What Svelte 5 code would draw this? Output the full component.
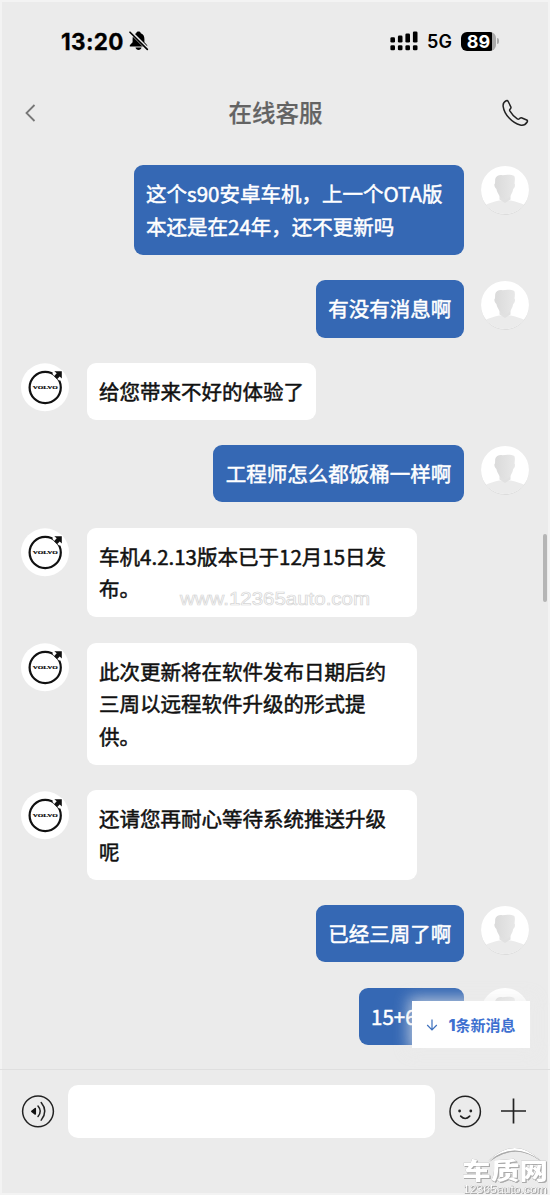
<script lang="ts">
	type Message = { me: boolean; text: string; clipped?: boolean };

	const messages: Message[] = [
		{ me: true, text: '这个s90安卓车机，上一个OTA版本还是在24年，还不更新吗' },
		{ me: true, text: '有没有消息啊' },
		{ me: false, text: '给您带来不好的体验了' },
		{ me: true, text: '工程师怎么都饭桶一样啊' },
		{ me: false, text: '车机4.2.13版本已于12月15日发布。' },
		{ me: false, text: '此次更新将在软件发布日期后约三周以远程软件升级的形式提供。' },
		{ me: false, text: '还请您再耐心等待系统推送升级呢' },
		{ me: true, text: '已经三周了啊' },
		{ me: true, text: '15+6', clipped: true }
	];
</script>

<div class="phone">
	<div class="status">
		<span class="time">13:20</span>
		<svg class="bell" width="20" height="20" viewBox="0 0 20 20">
			<path d="M9.500 .6C8.200 .6 7.400 1.300 7.200 2.200 4.400 3.200 3.600 5.500 3.600 8v3.200L.8 14.200V15.500H18.200V14.200L15.400 11.200V8c0-2.500-.8-4.800-3.600-5.800C11.600 1.300 10.800 .6 9.500 .6z" />
			<path d="M6.500 16.600h6c-.3 1.600-1.500 2.500-3 2.500s-2.700-.9-3-2.500z" />
			<path d="M1.600 1 18.800 18.200" stroke="#ebebeb" stroke-width="3.400" />
			<path d="M1 1.200 18.300 18.400" stroke="#000" stroke-width="1.600" stroke-linecap="round" />
		</svg>
		<svg class="signal" width="29" height="20" viewBox="0 0 29 20">
			<rect x=".4" y="6.300" width="4.600" height="5.200" rx="1.300" />
			<rect x="7.900" y="4.600" width="4.600" height="6.900" rx="1.300" />
			<rect x="15.400" y="2.400" width="4.600" height="9.100" rx="1.300" />
			<rect x="22.900" y=".4" width="4.600" height="11.100" rx="1.300" />
			<rect x=".4" y="14.200" width="4.600" height="5" rx="1.300" />
			<rect x="7.900" y="14.200" width="4.600" height="5" rx="1.300" />
			<rect x="15.400" y="14.200" width="4.600" height="5" rx="1.300" />
			<rect x="22.900" y="14.200" width="4.600" height="5" rx="1.300" />
		</svg>
		<span class="net">5G</span>
		<div class="battery">89</div>
		<i class="tip"></i>
	</div>

	<header>
		<svg width="12" height="20" viewBox="0 0 12 20" fill="none" stroke="#777" stroke-width="1.800">
			<path d="M10.500 2 2.500 10l8 8" />
		</svg>
		<h1>在线客服</h1>
		<svg width="28" height="28" viewBox="0 0 28 28" fill="none" stroke="#222" stroke-width="1.500" stroke-linejoin="round">
			<path d="M5.200 1.800C2.800 2.900 1.800 5 2.200 7.600c1.100 7.900 9.100 16.600 17 18.400 2.800.6 5.600-.7 7-3 .5-.9.400-1.500-.5-2L21 19c-.7-.3-1.300-.3-1.900.2l-1 .8c-.6.400-1.200.3-1.800-.1-3.200-2.200-5.700-4.900-7.500-8-.3-.6-.2-1.100.2-1.600l.6-.8c.5-.6.500-1.100.2-1.700L7.200 2.500c-.4-.8-1.100-1.100-2-.7z" />
		</svg>
	</header>

	<main>
		{#each messages as m}
			<div class="row" class:me={m.me}>
				{#if m.me}
					<svg class="avatar" width="48" height="49" viewBox="0 0 48 49">
						<defs>
							<clipPath id="face"><circle cx="24" cy="24" r="24" /></clipPath>
							<linearGradient id="skin"><stop stop-color="#dadada" /><stop offset="1" stop-color="#e8e8e8" /></linearGradient>
						</defs>
						<circle cx="24" cy="25" r="23.800" fill="#d8d8d8" />
						<g clip-path="url(#face)">
							<rect width="48" height="48" fill="#fff" />
							<path d="M0 48V42C6 37 13 36 18 34.500H30C35 36 42 37 48 42V48z" fill="#ebebeb" />
							<path d="M18.500 27H29.500V33.500L24 37 18.500 33.500z" fill="#e1e1e1" />
							<path d="M14.200 13C15 9.800 18.500 8.500 21.500 9.300 26 8.300 31 8.800 33.300 10 34.300 12 33.800 15 33.500 17.500c1 .5 .5 4.500-1.300 5.500C31.500 28 27.500 33.500 24 33.500S16.500 28 15.400 23C13.300 21.500 12.800 17.800 14 17.500z" fill="url(#skin)" />
						</g>
					</svg>
				{:else}
					<svg class="avatar" width="48" height="49" viewBox="0 0 48 49">
						<circle cx="24" cy="24.300" r="24" fill="#fff" />
						<circle cx="24.200" cy="24.500" r="15.600" fill="none" stroke="#111" stroke-width="2.200" />
						<path d="M32.300 7.500H41.500V17L38 17.500 31.500 11z" fill="#fff" />
						<path d="M33.300 8.200H40.800V15.500L38.700 13.400 36 16.200 33 13.200 35.700 10.300z" fill="#111" />
						<text x="24.200" y="26" text-anchor="middle" textLength="25" lengthAdjust="spacingAndGlyphs">VOLVO</text>
					</svg>
				{/if}
				<div class="bubble" class:clipped={m.clipped}>{m.text}</div>
			</div>
		{/each}
	</main>

	<footer>
		<svg width="34" height="34" viewBox="0 0 34 34" fill="none" stroke="#222" stroke-width="1.500">
			<circle cx="17" cy="17.300" r="15.400" />
			<path d="M10.800 17.300 14.300 14.500v5.600z" fill="#111" stroke="#111" stroke-width="1.500" stroke-linejoin="round" />
			<path d="M17 12.100q4.500 5.200 0 10.400M20.200 8.500q7.200 8.800 0 17.600" stroke-linecap="round" />
		</svg>
		<input aria-label="消息" />
		<svg width="34" height="34" viewBox="0 0 34 34" fill="none" stroke="#222" stroke-width="1.500">
			<circle cx="17.200" cy="17.500" r="15.200" />
			<circle cx="11.600" cy="17" r="1.400" fill="#222" stroke="none" />
			<circle cx="22.800" cy="17" r="1.400" fill="#222" stroke="none" />
			<path d="M12.700 22.200q4.500 4.600 9 0" stroke-linecap="round" stroke-width="1.700" />
		</svg>
		<svg class="plus" width="26" height="26" viewBox="0 0 26 26" stroke="#222" stroke-width="1.700">
			<path d="M13.500 .5v25M1 13h25" />
		</svg>
	</footer>

	<button class="newmsg">
		<svg width="12" height="12" viewBox="0 0 12 12" fill="none" stroke="#3d70bd" stroke-width="1.200">
			<path d="M6 .5v10M1.200 6 6 10.800 10.800 6" />
		</svg>
		<span><b>1</b>条新消息</span>
	</button>

	<i class="scroll"></i>

	<svg class="mark" width="200" height="26" viewBox="0 0 200 26">
		<text x="4" y="18.500" textLength="190" lengthAdjust="spacingAndGlyphs">www.12365auto.com</text>
	</svg>
	<svg class="logo" width="90" height="50" viewBox="0 0 90 50">
		<g class="shade">
			<path d="M27 14Q54-12 80 14Q54-7 27 14z" fill="#fff" />
			<text class="name" x="1" y="32" textLength="86" lengthAdjust="spacingAndGlyphs">车质网</text>
			<text class="site" x="2" y="45.500" textLength="84" lengthAdjust="spacingAndGlyphs">12365auto.com</text>
		</g>
	</svg>
</div>

<style>
	:global(body) {
		background: #ebebeb;
	}

	.phone {
		position: relative;
		display: flex;
		flex-direction: column;
		box-sizing: border-box;
		width: 550px;
		height: 1195px;
		overflow: hidden;
		background: #ebebeb;
		box-shadow: inset 0 0 0 2px #f3f3f3;
		font-family: "Noto Sans CJK SC", sans-serif;
	}

	.status {
		display: flex;
		align-items: center;
		height: 82px;
		padding-left: 61px;
		font-family: Inter, sans-serif;
		font-weight: 700;
	}
	.time {
		width: 68px;
		font-size: 22.500px;
		letter-spacing: 0.35px;
		-webkit-text-stroke: 0.3px #000;
	}
	.signal {
		margin-left: 241px;
	}
	.net {
		width: 25px;
		margin-left: 8px;
		font-size: 18px;
		font-weight: 600;
		letter-spacing: 0.1px;
	}
	.battery {
		width: 35px;
		height: 19px;
		margin-left: 9px;
		border-radius: 6px;
		background: linear-gradient(90deg, #000 31px, #aaa 31px);
		color: #fff;
		font-size: 18px;
		line-height: 19px;
		text-align: center;
	}
	.tip {
		width: 2px;
		height: 6px;
		margin-left: 1px;
		border-radius: 0 2px 2px 0;
		background: #aaa;
	}

	header {
		display: flex;
		align-items: center;
		justify-content: space-between;
		height: 62px;
		padding: 0 21px 0 24px;
	}
	h1 {
		margin: -2px 0 0 14px;
		color: #636363;
		font-size: 23.500px;
		font-weight: 500;
		-webkit-text-stroke: 0.2px #636363;
	}

	main {
		display: flex;
		flex-direction: column;
		gap: 25.200px;
		box-sizing: border-box;
		height: 926px;
		padding: 21.300px 21px 0;
		border-bottom: 1px solid #dfdfdf;
	}
	.row {
		display: flex;
		align-items: flex-start;
		gap: 17.500px;
	}
	.row.me {
		flex-direction: row-reverse;
	}
	.avatar {
		flex: none;
		margin-top: 0.5px;
	}
	.avatar text {
		font: 700 5px "Liberation Serif", serif;
		stroke: #111;
		stroke-width: 0.2px;
	}
	.bubble {
		box-sizing: border-box;
		max-width: 330px;
		padding: 12.200px 12.200px 12.600px 12.600px;
		border-radius: 9px;
		background: #fff;
		color: #111;
		font-size: 20.500px;
		font-weight: 400;
		line-height: 32.500px;
		-webkit-text-stroke: 0.5px currentColor;
	}
	.me .bubble {
		background: #3568b4;
		color: #fff;
	}
	.row .clipped {
		width: 105px;
	}

	footer {
		display: flex;
		align-items: center;
		height: 82px;
		padding: 0 23px 0 21px;
	}
	input {
		box-sizing: border-box;
		width: 367px;
		height: 53px;
		margin: 0 13px;
		border: 0;
		border-radius: 10px;
		background: #fff;
	}
	.plus {
		margin-left: 18px;
	}

	.newmsg {
		position: absolute;
		top: 1001px;
		left: 412px;
		display: flex;
		align-items: center;
		justify-content: center;
		gap: 10px;
		width: 118px;
		height: 47px;
		padding: 0;
		border: 0;
		background: #fff;
		box-shadow: 0 0 14px 3px rgba(235, 235, 235, 0.7);
		color: #3d70d0;
		font: 700 15px "Noto Sans CJK SC", sans-serif;
	}
	.newmsg b {
		font-family: Inter, sans-serif;
		font-size: 16px;
		font-weight: 800;
	}

	.scroll {
		position: absolute;
		top: 534px;
		left: 543px;
		width: 4px;
		height: 68px;
		border-radius: 2px;
		background: #b5b5b5;
	}

	.mark {
		position: absolute;
		top: 586px;
		left: 176px;
	}
	.mark text {
		fill: #fff;
		stroke: #d6d6d6;
		stroke-width: 0.7px;
		font: 18px "Liberation Sans", sans-serif;
	}
	.logo {
		position: absolute;
		top: 1147px;
		left: 461px;
	}
	.shade {
		filter: drop-shadow(0 0 0.6px #888) drop-shadow(1px 1px 0.4px #aaa);
	}
	.logo text {
		fill: #fff;
	}
	.name {
		font: 900 23px "Noto Sans CJK SC", sans-serif;
	}
	.site {
		font: 11px "Liberation Sans", sans-serif;
	}
</style>
